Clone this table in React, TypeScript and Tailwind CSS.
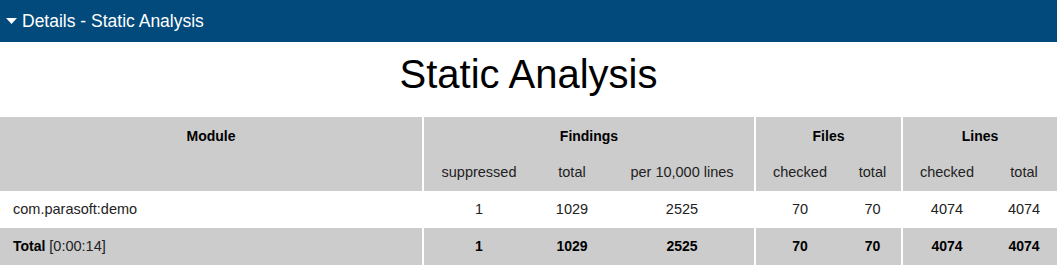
import React from 'react';

interface ModuleRow {
  name: string;
  suppressed: number;
  total: number;
  perLines: number;
  filesChecked: number;
  filesTotal: number;
  linesChecked: number;
  linesTotal: number;
}

const rows: ModuleRow[] = [
  {
    name: 'com.parasoft:demo',
    suppressed: 1,
    total: 1029,
    perLines: 2525,
    filesChecked: 70,
    filesTotal: 70,
    linesChecked: 4074,
    linesTotal: 4074,
  },
];

const font = { fontFamily: '"Liberation Sans", Arial, sans-serif' };

// group start columns get the white divider
const sep = 'border-l-2 border-white';

export default function App() {
  return (
    <div className="w-[1057px] bg-white text-[#222]" style={font}>
      <div className="flex h-[42px] items-center bg-[#014a7b] text-white">
        <svg width="11" height="6" viewBox="0 0 11 6" className="ml-[6px] mr-[5px]">
          <polygon points="0,0 11,0 5.5,6" fill="#fff" />
        </svg>
        <span className="text-[17.5px]">Details - Static Analysis</span>
      </div>

      <h1 className="h-[75px] pt-[9px] text-center text-[40px] leading-[46px] text-black">
        Static Analysis
      </h1>

      <table className="w-full table-fixed border-separate border-spacing-0 text-[14.5px]">
        <colgroup>
          <col className="w-[422px]" />
          <col className="w-[112px]" />
          <col className="w-[76px]" />
          <col className="w-[144px]" />
          <col className="w-[90px]" />
          <col className="w-[57px]" />
          <col className="w-[90px]" />
          <col className="w-[66px]" />
        </colgroup>
        <thead className="bg-[#cccccc]">
          <tr className="h-[38px]">
            <th className="text-[14px] font-bold text-black">Module</th>
            <th colSpan={3} className={`${sep} text-[14px] font-bold text-black`}>Findings</th>
            <th colSpan={2} className={`${sep} text-[14px] font-bold text-black`}>Files</th>
            <th colSpan={2} className={`${sep} text-[14px] font-bold text-black`}>Lines</th>
          </tr>
          <tr className="h-[36px]">
            <th />
            <th className={`${sep} font-normal`}>suppressed</th>
            <th className="font-normal">total</th>
            <th className="font-normal">per 10,000 lines</th>
            <th className={`${sep} font-normal`}>checked</th>
            <th className="font-normal">total</th>
            <th className={`${sep} font-normal`}>checked</th>
            <th className="font-normal">total</th>
          </tr>
        </thead>
        <tbody>
          {rows.map((r) => (
            <tr key={r.name} className="h-[37px] text-center">
              <td className="pl-[13px] text-left">{r.name}</td>
              <td className={sep}>{r.suppressed}</td>
              <td>{r.total}</td>
              <td>{r.perLines}</td>
              <td className={sep}>{r.filesChecked}</td>
              <td>{r.filesTotal}</td>
              <td className={sep}>{r.linesChecked}</td>
              <td>{r.linesTotal}</td>
            </tr>
          ))}
        </tbody>
        <tfoot className="bg-[#cccccc]">
          <tr className="h-[37px] text-center text-[14px] font-bold text-black">
            <td className="pl-[13px] text-left">
              Total <span className="text-[14.5px] font-normal text-[#222]">[0:00:14]</span>
            </td>
            <td className={sep}>1</td>
            <td>1029</td>
            <td>2525</td>
            <td className={sep}>70</td>
            <td>70</td>
            <td className={sep}>4074</td>
            <td>4074</td>
          </tr>
        </tfoot>
      </table>
    </div>
  );
}
